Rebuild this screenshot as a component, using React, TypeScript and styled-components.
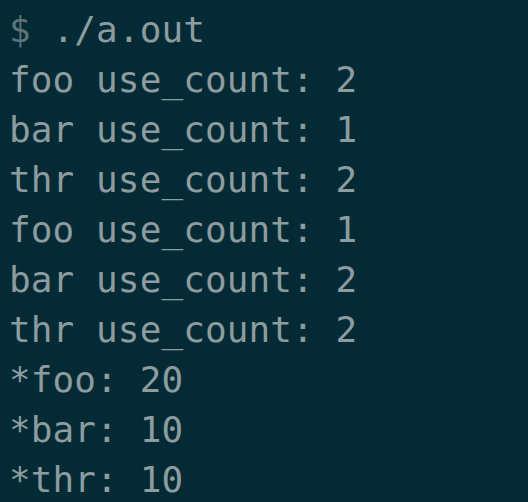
import React from "react";
import styled, { createGlobalStyle } from "styled-components";

const Global = createGlobalStyle`
  html, body { margin: 0; padding: 0; background: #032a35; }
  #root { min-height: 502px; }
`;

const Terminal = styled.div`
  box-sizing: border-box;
  width: 528px;
  height: 502px;
  overflow: hidden;
  background: #032a35;
  padding: 5px 0 0 9px;
  font-family: "DejaVu Sans Mono", "Liberation Mono", monospace;
  font-size: 36px;
  line-height: 50px;
  letter-spacing: 0.1px;
  color: #8d9c9e;
  white-space: pre;
`;

const Line = styled.div`
  height: 50px;
`;

const Prompt = styled.span`
  color: #5f7479;
`;

const lines = [
  "foo use_count: 2",
  "bar use_count: 1",
  "thr use_count: 2",
  "foo use_count: 1",
  "bar use_count: 2",
  "thr use_count: 2",
  "*foo: 20",
  "*bar: 10",
  "*thr: 10",
];

export default function App() {
  return (
    <>
      <Global />
      <Terminal>
        <Line>
          <Prompt>$</Prompt> ./a.out
        </Line>
        {lines.map((l, i) => (
          <Line key={i}>{l}</Line>
        ))}
      </Terminal>
    </>
  );
}
